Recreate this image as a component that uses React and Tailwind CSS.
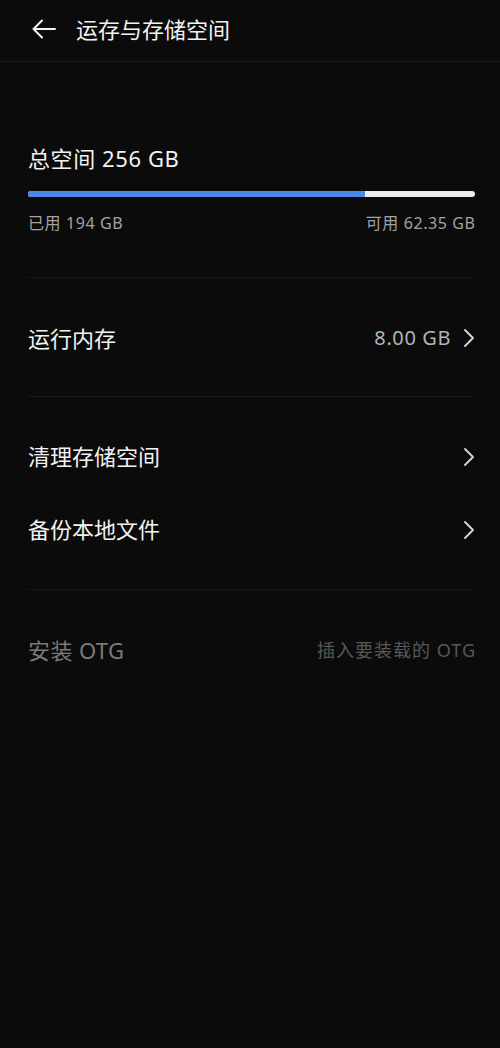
import React from "react";

const font = { fontFamily: '"Noto Sans", "Noto Sans CJK SC", sans-serif' };

const Chevron = () => (
  <svg width="12" height="20" viewBox="0 0 12 20" fill="none" className="ml-[12px]">
    <path d="M2 2 L10 10 L2 18" stroke="#d8d8d8" strokeWidth="1.8" strokeLinecap="round" strokeLinejoin="round" />
  </svg>
);

const Divider = () => <div className="h-px bg-[#181818]" />;

export default function App() {
  return (
    <div className="min-h-[1048px] w-full bg-[#0b0b0b] text-[#f2f2f2]" style={font}>
      {/* header */}
      <div className="h-[62px] flex items-start pt-[14px] border-b border-[#1c1c1c] pl-[31px]">
        <svg width="26" height="30" viewBox="0 0 26 30" fill="none">
          <path d="M24 15 H3 M11 6.5 L2.5 15 L11 23.5" stroke="#f2f2f2" strokeWidth="2" strokeLinecap="round" strokeLinejoin="round" />
        </svg>
        <span className="ml-[19px] text-[22px] leading-[30px]">运存与存储空间</span>
      </div>

      <div className="pl-[28px] pr-[25px]">
        {/* storage summary */}
        <div className="pt-[81px] text-[22px] leading-[30px] tracking-[0.6px]">总空间 256 GB</div>
        <div className="mt-[18px] h-[6px] rounded-full bg-[#ececec] flex overflow-hidden">
          <div className="w-[75.4%] bg-[#4a87e6]" />
        </div>
        <div className="mt-[16px] flex justify-between text-[16px] leading-[20px] tracking-[0.6px] text-[#a3a3a3]">
          <span>已用 194 GB</span>
          <span className="-mr-[0.6px]">可用 62.35 GB</span>
        </div>
        <div className="mt-[44px]">
          <Divider />
        </div>

        {/* memory */}
        <div className="h-[118px] pt-[2px] flex items-center justify-between">
          <span className="text-[22px]">运行内存</span>
          <div className="flex items-center">
            <span className="text-[20px] tracking-[0.6px] text-[#b4b4b4]">8.00 GB</span>
            <Chevron />
          </div>
        </div>
        <Divider />

        {/* actions */}
        <div className="py-[23px]">
          <div className="h-[73px] flex items-center justify-between">
            <span className="text-[22px]">清理存储空间</span>
            <Chevron />
          </div>
          <div className="h-[73px] flex items-center justify-between">
            <span className="text-[22px]">备份本地文件</span>
            <Chevron />
          </div>
        </div>
        <Divider />

        {/* otg */}
        <div className="h-[120px] flex items-center justify-between">
          <span className="text-[22px] tracking-[0.4px] text-[#7a7a7a]">安装 OTG</span>
          <span className="text-[18px] tracking-[1px] -mr-[1px] text-[#575757]">插入要装载的 OTG</span>
        </div>
      </div>
    </div>
  );
}
